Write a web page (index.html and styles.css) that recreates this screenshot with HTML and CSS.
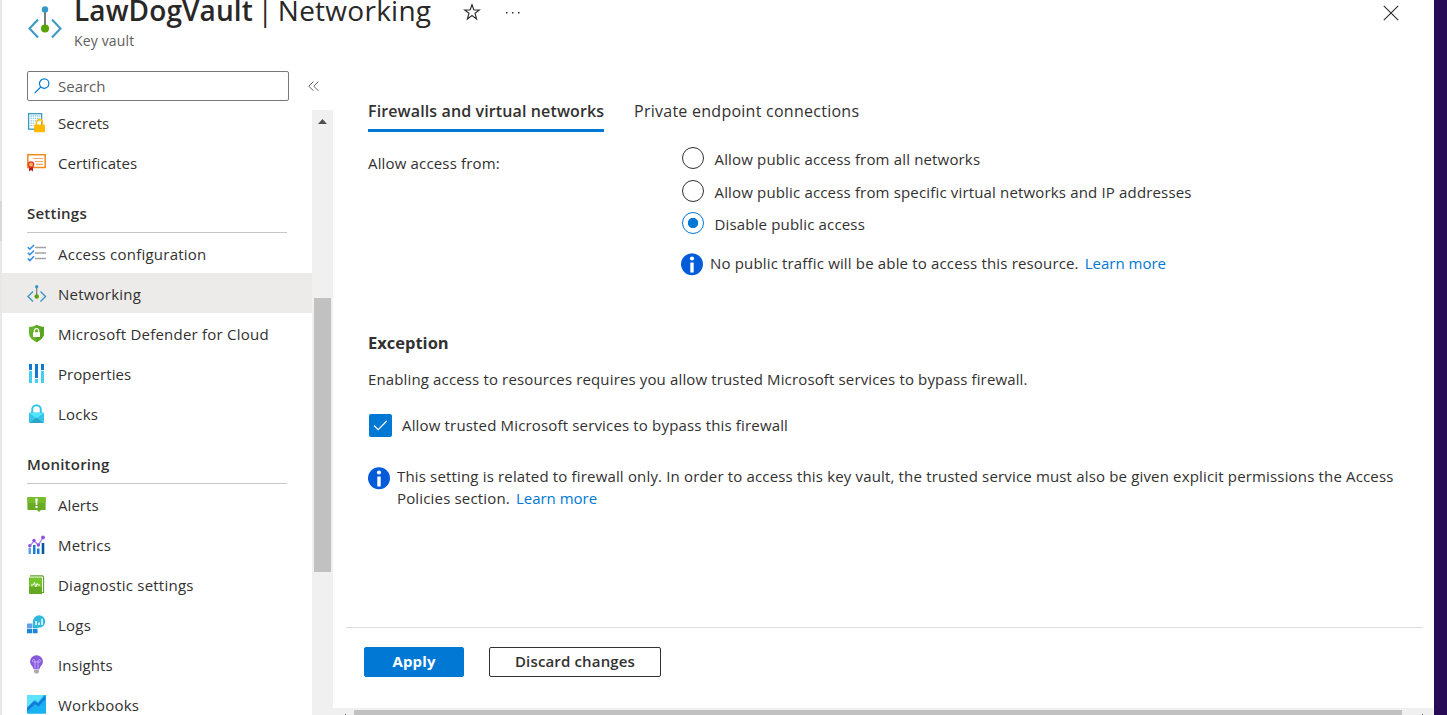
FILE: index.html
```html
<!DOCTYPE html>
<html lang="en">
<head>
<meta charset="utf-8">
<title>LawDogVault | Networking</title>
<link rel="stylesheet" href="styles.css">
</head>
<body>
<div class="edge-left"><div class="edge-mark"></div></div>
<div class="blade">
  <header class="header">
    <svg class="header-icon" width="36" height="34" viewBox="0 0 36 34"><path d="M11 13.500 2.500 22.500 11 31.500M25 13.500 33.500 22.500 25 31.500" fill="none" stroke="#3999c6" stroke-width="2"/><path d="M18 4v18" stroke="#7a7a7a" stroke-width="2"/><circle cx="18" cy="3.500" r="3.200" fill="#3999c6"/><circle cx="18" cy="22.500" r="4" fill="#57a300"/></svg>
    <div class="heading">
      <h1 class="title"><b>LawDogVault</b><span class="title-rest"> | Networking</span></h1>
      <div class="subtitle">Key vault</div>
    </div>
    <svg class="star" width="18" height="18" viewBox="0 0 18 18"><path d="M9 1.700 10.900 7H16.300L12 10.300 13.600 15.900 9 12.500 4.400 15.900 6 10.300 1.700 7H7.100Z" fill="none" stroke="#323130" stroke-width="1.200"/></svg>
    <svg class="more" width="16" height="4" viewBox="0 0 16 4"><path d="M1 1h1.500v1.500H1zM7 1h1.500v1.500H7zM13 1h1.500v1.500H13z" fill="#323130"/></svg>
    <svg class="close" width="16" height="16" viewBox="0 0 16 16"><path d="M.8.8 15.200 15.200M15.200.8.8 15.200" stroke="#323130" stroke-width="1.200"/></svg>
  </header>
  <div class="body">
    <aside class="sidebar">
      <div class="search-row">
        <div class="search">
          <svg width="16" height="16" viewBox="0 0 16 16"><circle cx="10.200" cy="5.600" r="4.700" fill="none" stroke="#0078d4" stroke-width="1.200"/><path d="M6.800 9 .6 15.200" stroke="#0078d4" stroke-width="1.200"/></svg>
          <span>Search</span>
        </div>
        <svg class="collapse" width="11" height="11" viewBox="0 0 11 11"><path d="M5.300.7.8 5.200 5.300 9.700M10.300.7 5.800 5.200 10.300 9.700" fill="none" stroke="#605e5c" stroke-width="1"/></svg>
      </div>
      <div class="side-main">
        <nav class="menu">
          <a class="item tight"><svg width="20" height="20" viewBox="0 0 20 20"><rect x="1.600" y=".7" width="13" height="15.500" fill="#fff" stroke="#3999c6" stroke-width="1.300"/><path d="M3.500 3h9.500M3.500 5.400h9.500M3.500 7.800h9.500M3.500 10.200h4M3.500 12.600h3" stroke="#8cc7e6" stroke-width="1.300" stroke-dasharray="1.400 .8"/><path d="M9.400 12V9.700a3 3 0 0 1 6 0V12" fill="none" stroke="#fcc419" stroke-width="1.700"/><rect x="7" y="11.500" width="11" height="7.800" rx="1" fill="#ffb900"/></svg><span>Secrets</span></a>
          <a class="item tight"><svg width="20" height="20" viewBox="0 0 20 20"><rect x=".8" y="1.700" width="17.400" height="12.800" fill="#fff" stroke="#f08a1c" stroke-width="1.500"/><path d="M6 5.500h10M8 8.500h8M9 11.300h7" stroke="#f5a86a" stroke-width="1.200"/><path d="M2 13h4v5.500l-2-1.500-2 1.500z" fill="#b31e1e"/><circle cx="4" cy="11.500" r="3.300" fill="#e8382f"/><circle cx="4" cy="11.500" r="2" fill="#ffb04c"/></svg><span>Certificates</span></a>
          <h2 class="group">Settings</h2>
          <a class="item"><svg width="20" height="20" viewBox="0 0 20 20"><path d="M8 3.500h11M8 9h11M8 14.500h11" stroke="#a3a3a3" stroke-width="1.700"/><path d="m.8 3.200 2 2L7 1M.8 8.700l2 2L7 6.500M.8 14.500l2 2L7 12.300" fill="none" stroke="#2f8ee8" stroke-width="1.600"/></svg><span>Access configuration</span></a>
          <a class="item selected"><svg width="20" height="20" viewBox="0 0 20 20"><path d="M6 7.500 1 12.500l5 5M13.500 7.500l5 5-5 5" fill="none" stroke="#3999c6" stroke-width="1.400"/><path d="M9.700 3v9" stroke="#7a7a7a" stroke-width="1.200"/><circle cx="9.700" cy="2.700" r="1.700" fill="#3999c6"/><circle cx="9.700" cy="12.500" r="2.200" fill="#57a300"/></svg><span>Networking</span></a>
          <a class="item"><svg width="20" height="20" viewBox="0 0 20 20"><path d="M9.500.8C12 2.600 14.500 2.800 17 2.900V9c0 5-4 7-7.500 9.300C6 16 2 14 2 9V2.900C4.500 2.800 7 2.600 9.500.8Z" fill="#69b02c"/><path d="M9.500.8C12 2.600 14.500 2.800 17 2.900V9c0 5-4 7-7.500 9.300Z" fill="#5aa420"/><path d="M7.400 9V6.700a2.100 2.100 0 0 1 4.200 0V9" fill="none" stroke="#fff" stroke-width="1.300"/><rect x="6" y="8.300" width="7" height="4.700" rx=".5" fill="#fff"/></svg><span>Microsoft Defender for Cloud</span></a>
          <a class="item tight"><svg width="20" height="20" viewBox="0 0 20 20"><path d="M2 0h3v6H2zM8 0h3v14H8zM14 0h3v6h-3z" fill="#0f78d4"/><path d="M2 7h3v12H2zM8 15h3v4H8zM14 7h3v12h-3z" fill="#45cdf0"/></svg><span>Properties</span></a>
          <a class="item"><svg width="20" height="20" viewBox="0 0 20 20"><path d="M5.200 9.500V5.500a4.300 4.300 0 0 1 8.600 0v4" fill="none" stroke="#32c5ea" stroke-width="2"/><rect x="2" y="8.500" width="15" height="10.500" rx="1" fill="#35c5eb"/><path d="M2.300 9h14.400L9.500 14.500z" fill="#50e6ff"/><path d="m2.500 19 7-5.500 7 5.500z" fill="#2da3c8"/></svg><span>Locks</span></a>
          <h2 class="group">Monitoring</h2>
          <a class="item tight"><svg width="20" height="20" viewBox="0 0 20 20"><path d="M1 2h17a.6.6 0 0 1 .6.600V14.500a.6.6 0 0 1-.6.600H14l-2 2-2-2H1a.6.6 0 0 1-.6-.6V2.600A.6.600 0 0 1 1 2Z" fill="#69ab26"/><path d="M1 2h17a.6.6 0 0 1 .6.600V8H.4V2.600A.6.600 0 0 1 1 2Z" fill="#76bc2d"/><path d="M8.300 3.500h2.400l-.4 6.500H8.700zM8.500 11h2v2h-2z" fill="#fff"/></svg><span>Alerts</span></a>
          <a class="item"><svg width="20" height="20" viewBox="0 0 20 20"><path d="M1.500 13H4v6H1.500z" fill="#5ea0ef"/><path d="M6 10h2.500v9H6zM10 13.500h2.500V19H10z" fill="#1b7fd6"/><path d="M14.700 8h2.600v11h-2.600z" fill="#005ba1"/><path d="M2.800 10.800 7.100 6l4.300 4 4.600-7.500" fill="none" stroke="#a67af4" stroke-width="1.200"/><g fill="#9050e0"><circle cx="2.800" cy="10.800" r="1.700"/><circle cx="7" cy="5.500" r="1.700"/><circle cx="11.400" cy="10" r="1.700"/><circle cx="16" cy="2.500" r="1.900"/></g></svg><span>Metrics</span></a>
          <a class="item"><svg width="20" height="20" viewBox="0 0 20 20"><path d="M3 .9h12.300a1.300 1.300 0 0 1 1.300 1.300v15.300H15" fill="#fff" stroke="#5ea52a" stroke-width="1.100"/><path d="M3 2.500h12V19H3.500A1.500 1.500 0 0 1 2 17.500V1.500A1 1 0 0 0 3 2.500Z" fill="#76c42c"/><path d="M2 12h13v7H3.500A1.500 1.500 0 0 1 2 17.500Z" fill="#62a822"/><path d="M4 10h2.200l1.300-2.500L8.800 12l1.400-3.500.8 1.500H13" fill="none" stroke="#fff" stroke-width="1"/></svg><span>Diagnostic settings</span></a>
          <a class="item"><svg width="20" height="20" viewBox="0 0 20 20"><path d="M0 8.500h5v4.500H0z" fill="#5ea0ef"/><path d="M0 13.700h5v4.500H0zM5.700 13.700h4.800v4.500H5.700z" fill="#1b85d8"/><path d="M5.700 8.500h4.800v4.500H5.700z" fill="#1b85d8"/><path d="M12 .3a6.200 6.200 0 1 1 0 12.400H5.900V6.500A6.200 6.200 0 0 1 12 .3Z" fill="#30b9df"/><path d="M8.300 6h1.500v4H8.300zM11.300 7.500h1.500V10h-1.500zM14.300 3.700h1.500V10h-1.500z" fill="#fff"/></svg><span>Logs</span></a>
          <a class="item tight"><svg width="20" height="20" viewBox="0 0 20 20"><path d="M9.500.2A6.300 6.300 0 0 1 15.900 6.400c0 3.500-3 4.500-3.500 7.800H6.600C6.100 10.900 3.100 9.900 3.100 6.400A6.300 6.300 0 0 1 9.500.2Z" fill="#8757dc"/><path d="M8 13.500V7M11 13.500V7M7.800 7H6.500a1.200 1.200 0 1 1 1.400-1.300V7h3.200V5.700A1.200 1.200 0 1 1 12.500 7h-1.300" fill="none" stroke="#cdb5f6" stroke-width=".9"/><path d="M7 14.700h5v2.500l-1.500 1.200h-2L7 17.200z" fill="#aaa"/></svg><span>Insights</span></a>
          <a class="item"><svg width="20" height="20" viewBox="0 0 20 20"><rect width="19" height="18.800" rx=".7" fill="#18b2f2"/><path d="M.5 0H17L11 7.200 8 4.700 0 12.500V.5z" fill="#5fe3fb"/><path d="M0 13 7 6l4 2.500L18.500.3V4L11.500 11.500 8 9.200 0 16.500z" fill="#1779d6"/></svg><span>Workbooks</span></a>
        </nav>
        <div class="vscroll"><svg width="9" height="5" viewBox="0 0 9 5"><path d="M0 5 4.500 0 9 5z" fill="#505050"/></svg><div class="vthumb"></div></div>
      </div>
    </aside>
    <main class="content">
      <div class="scroll-area">
        <div class="tabs"><div class="tab active">Firewalls and virtual networks</div><div class="tab">Private endpoint connections</div></div>
        <div class="access">
          <div class="label">Allow access from:</div>
          <div class="options">
            <label class="option"><i class="radio"></i><span>Allow public access from all networks</span></label>
            <label class="option"><i class="radio"></i><span>Allow public access from specific virtual networks and IP addresses</span></label>
            <label class="option"><i class="radio checked"></i><span>Disable public access</span></label>
            <div class="notice"><svg width="23" height="23" viewBox="0 0 23 23"><circle cx="11" cy="11.300" r="11" fill="#015cda"/><circle cx="11" cy="5.500" r="2.100" fill="#fff"/><path d="M9.300 9.500h3.400v10H9.300z" fill="#fff"/></svg><p><span>No public traffic will be able to access this resource.</span><a class="link">Learn more</a></p></div>
          </div>
        </div>
        <h3 class="section-title">Exception</h3>
        <p class="desc">Enabling access to resources requires you allow trusted Microsoft services to bypass firewall.</p>
        <label class="check-row"><i class="checkbox"><svg width="15" height="11" viewBox="0 0 15 11"><path d="M1 5.500 5.200 9.700 13.700 1" fill="none" stroke="#fff" stroke-width="1.100"/></svg></i><span>Allow trusted Microsoft services to bypass this firewall</span></label>
        <div class="notice wide"><svg width="23" height="23" viewBox="0 0 23 23"><circle cx="11" cy="11.300" r="11" fill="#015cda"/><circle cx="11" cy="5.500" r="2.100" fill="#fff"/><path d="M9.300 9.500h3.400v10H9.300z" fill="#fff"/></svg><p><span>This setting is related to firewall only. In order to access this key vault, the trusted service must also be given explicit permissions the Access</span><br><span>Policies section.</span><a class="link">Learn more</a></p></div>
      </div>
      <footer class="footer"><button class="btn primary">Apply</button><button class="btn">Discard changes</button></footer>
      <div class="hscroll"><i class="tip"></i><div class="hthumb"></div><i class="tip"></i></div>
    </main>
  </div>
</div>
<div class="edge-right"></div>
</body>
</html>
```
FILE: styles.css
```css
* { box-sizing: border-box; }
body { margin: 0; width: 1447px; height: 715px; overflow: hidden; display: flex; background: #fff; color: #323130; font: 380 15px/20px "Open Sans", "Noto Sans", sans-serif; letter-spacing: .163px; }
h1, h2, h3, p { margin: 0; font-weight: inherit; }
p, span { white-space: pre; }
svg { flex: none; display: block; }
i { flex: none; display: block; }
.edge-left { width: 2px; background: #e8e8e8; padding-top: 201px; flex: none; }
.edge-mark { height: 40px; background: #d8d8d8; }
.edge-right { width: 13px; background: #280b56; flex: none; }
.blade { width: 1432px; height: 715px; display: flex; flex-direction: column; }

.header { height: 71px; flex: none; display: flex; align-items: flex-start; padding-left: 25px; }
.header-icon { margin-top: 6px; }
.heading { width: 357px; margin-left: 12px; flex: none; }
.title { font-size: 28px; line-height: 36px; margin: -8px 0 0 -1px; white-space: nowrap; display: flex; color: #292827; letter-spacing: 0; }
.title b { font-weight: 600; letter-spacing: .1px; }
.title-rest { font-weight: 370; letter-spacing: .26px; word-spacing: -2.900px; }
.subtitle { font-size: 14px; color: #605e5c; line-height: 20px; margin: 3px 0 0 -1px; letter-spacing: .15px; }
.star { margin: 3px 0 0 31px; }
.more { margin: 11px 0 0 24px; }
.close { margin: 5px 35px 0 auto; }

.body { flex: 1; display: flex; min-height: 0; }
.sidebar { width: 331px; flex: none; display: flex; flex-direction: column; letter-spacing: .23px; }
.search-row { height: 31px; flex: none; display: flex; padding-left: 25px; }
.search { width: 262px; height: 30px; border: 1px solid #7a7876; border-radius: 2px; display: flex; align-items: center; gap: 8px; padding-left: 6px; color: #605e5c; letter-spacing: 0; }
.collapse { margin: 10px 0 0 19px; }
.side-main { flex: 1; display: flex; min-height: 0; }
.menu { width: 310px; overflow: hidden; }
.item { height: 40px; display: flex; align-items: center; gap: 11px; padding: 2px 0 0 25px; }
.tight { letter-spacing: .06px; }
.selected { background: #edebe9; }
.group { height: 51px; margin: 0 25px; padding-top: 21px; border-bottom: 1px solid #c8c6c4; font-size: 15px; font-weight: 560; }
.vscroll { width: 21px; margin-top: 8px; background: #f0f0f0; display: flex; flex-direction: column; align-items: center; padding-top: 9px; }
.vthumb { width: 17px; height: 274px; margin-top: 174px; background: #c1c1c1; }

.content { flex: 1; display: flex; flex-direction: column; min-width: 0; }
.scroll-area { height: 556px; padding: 28px 0 0 35px; flex: none; }
.tabs { display: flex; gap: 30px; height: 33px; font-size: 16px; letter-spacing: .26px; }
.tab { line-height: 24px; height: 33px; white-space: nowrap; }
.active { width: 236px; font-weight: 600; border-bottom: 3px solid #0078d4; letter-spacing: .12px; }
.access { display: flex; }
.label { width: 314px; padding-top: 21px; }
.options { padding-top: 15px; }
.option { display: flex; height: 32.500px; gap: 10.500px; }
.option span { padding-top: 2px; }
.radio { width: 22px; height: 22px; border: 1px solid #323130; border-radius: 50%; }
.checked { border-color: #0078d4; background: radial-gradient(circle, #0078d4 4.800px, transparent 5.500px); }
.notice { display: flex; gap: 6px; margin: 8px 0 0 -1px; }
.link { color: #0078d4; margin-left: 6px; letter-spacing: 0; }
.section-title { margin-top: 55px; font-size: 16.500px; line-height: 24px; font-weight: 700; letter-spacing: 0; }
.desc { margin-top: 14px; letter-spacing: .14px; }
.check-row { display: flex; gap: 10px; margin-top: 25px; padding-left: 1px; }
.check-row span { padding-top: 1px; }
.checkbox { width: 23px; height: 23px; background: #0078d4; border-radius: 2px; padding: 6px 0 0 4px; }
.wide { margin: 30px 0 0; }
.wide p { line-height: 22px; margin-top: -2px; }
.footer { height: 81px; margin: 0 11px 0 13px; border-top: 1px solid #dcdcdc; padding: 19px 0 0 18px; display: flex; gap: 25px; flex: none; }
.btn { width: 172px; height: 30px; padding: 0 0 2px; border: 1px solid #323130; border-radius: 2px; background: #fff; color: #323130; font: 570 15px/26px "Open Sans", sans-serif; letter-spacing: .15px; }
.primary { width: 100px; border-color: #0078d4; background: #0078d4; color: #fff; font-weight: 700; }
.hscroll { height: 7px; background: #f0f0f0; display: flex; align-items: flex-end; }
.hthumb { width: 1048px; height: 5px; background: #c1c1c1; margin: 0 20px 0 8px; }
.tip { width: 1px; height: 1px; background: #505050; margin-left: 12px; }
.hthumb + .tip { margin-left: 0; }
```
